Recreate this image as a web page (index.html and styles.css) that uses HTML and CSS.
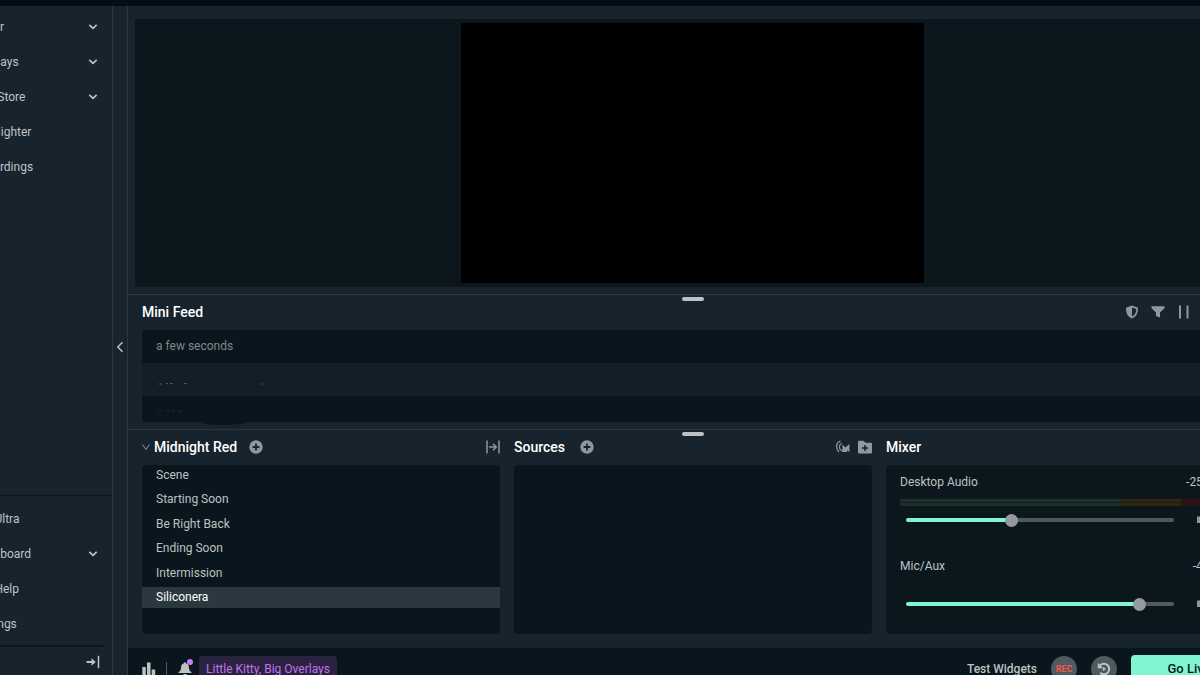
FILE: index.html
```html
<!DOCTYPE html>
<html lang="en">
<head>
<meta charset="utf-8">
<title>Streaming editor</title>
<link rel="stylesheet" href="styles.css">
</head>
<body>
<svg class="defs" width="0" height="0" aria-hidden="true">
  <symbol id="chevron" viewBox="0 0 10 8"><path d="M1.3 1.8 5 5.4 8.7 1.8" fill="none" stroke="currentColor" stroke-width="1.7"/></symbol>
  <symbol id="plus" viewBox="0 0 14 14"><path fill="currentColor" fill-rule="evenodd" d="M7 .3a6.7 6.7 0 1 0 0 13.4A6.7 6.7 0 0 0 7 .3zM6.1 3.6h1.8v2.500h2.500v1.800H7.900v2.500H6.100V7.900H3.600V6.100h2.500z"/></symbol>
  <symbol id="speaker" viewBox="0 0 14 14"><path fill="currentColor" d="M1 4Q1 3.500 1.700 3.500H5L8 .5v13L5 10H1.700Q1 10 1 9.500z"/><path d="M10 4q3 3 0 6" fill="none" stroke="currentColor" stroke-width="1.500"/></symbol>
</svg>
<div class="app">
  <header class="titlebar"></header>
  <div class="shell">
    <aside class="sidebar">
      <nav class="nav">
        <a class="nav-item" href="#">Editor<svg class="chevron"><use href="#chevron"/></svg></a>
        <a class="nav-item" href="#">Overlays<svg class="chevron"><use href="#chevron"/></svg></a>
        <a class="nav-item" href="#">App Store<svg class="chevron"><use href="#chevron"/></svg></a>
        <a class="nav-item" href="#">Highlighter</a>
        <a class="nav-item" href="#">Recordings</a>
      </nav>
      <nav class="nav nav-bottom">
        <a class="nav-item" href="#">Get Ultra</a>
        <a class="nav-item" href="#">Dashboard<svg class="chevron"><use href="#chevron"/></svg></a>
        <a class="nav-item" href="#">Get Help</a>
        <a class="nav-item" href="#">Settings</a>
      </nav>
      <div class="sidebar-foot">
        <button class="icon-btn" aria-label="Toggle sidebar">
          <svg width="14" height="14" viewBox="0 0 14 14" fill="none" stroke="currentColor"><path d="M.5 7h7" stroke-width="2"/><path d="M5.500 3.200 9.800 7 5.500 10.800z" fill="currentColor" stroke="none"/><path d="M12.500.8v12.400" stroke-width="1.500"/></svg>
        </button>
      </div>
    </aside>
    <button class="collapse" aria-label="Collapse panel">
      <svg width="8" height="12" viewBox="0 0 8 12"><path d="M6.500 1.300 1.800 6l4.700 4.700" fill="none" stroke="currentColor" stroke-width="1.500"/></svg>
    </button>
    <main class="main">
      <section class="preview"><div class="canvas"></div></section>

      <section class="feed">
        <div class="grip"></div>
        <div class="feed-head">
          <h2>Mini Feed</h2>
          <div class="tools">
            <button class="icon-btn" aria-label="Safe mode"><svg width="14" height="14" viewBox="0 0 14 14"><path fill="currentColor" fill-rule="evenodd" d="M7 .5 13 2.700C13 8 11.500 11.500 7 13.500 2.500 11.500 1 8 1 2.700zM7 2.500v9c3-1.500 4.200-4 4.300-7.600z"/></svg></button>
            <button class="icon-btn" aria-label="Filter"><svg width="14" height="14" viewBox="0 0 14 14"><path fill="currentColor" d="M.5 1.200h13v2L9 7.500v5L5 11V7.500L.5 3.200z"/></svg></button>
            <button class="icon-btn" aria-label="Pause"><svg width="14" height="14" viewBox="0 0 14 14"><path fill="currentColor" d="M2 .5h2v13H2zM9.500.5h2v13h-2z"/></svg></button>
            <button class="icon-btn" aria-label="Skip"><svg width="14" height="14" viewBox="0 0 14 14"><path fill="currentColor" d="M1 1l6 6-6 6zM7 1l6 6-6 6z"/></svg></button>
            <button class="icon-btn" aria-label="Mute"><svg width="14" height="14"><use href="#speaker"/></svg></button>
          </div>
        </div>
        <div class="feed-list">
          <div class="feed-row">a few seconds</div>
          <div class="feed-row alt"><svg class="marks" width="110" height="8" viewBox="0 0 110 8"><path d="M3 5h3M10 4.500h2M14 4.500h3M28 4.500h3M105 5h2" stroke="#4a565c"/><path d="M20 5h4M60 5h4M88 5h4" stroke="#1d2a32"/></svg></div>
          <div class="feed-row"><svg class="marks" width="90" height="8" viewBox="0 0 90 8"><path d="M2 5h3M10 5h4M16 5h3M22 5h4" stroke="#1f2c33"/><ellipse cx="67" cy="16" rx="23" ry="3" fill="#09161d"/></svg></div>
        </div>
      </section>

      <section class="docks">
        <div class="grip"></div>
        <div class="dock">
          <div class="dock-head">
            <svg class="thin-chevron" width="8" height="8" viewBox="0 0 8 8"><path d="M.5 1.500 4 6.500l3.500-5" fill="none" stroke="currentColor"/></svg>
            <h2>Midnight Red</h2>
            <button class="icon-btn" aria-label="Add scene"><svg width="14" height="14"><use href="#plus"/></svg></button>
            <div class="tools">
              <button class="icon-btn" aria-label="Scene transitions"><svg width="14" height="14" viewBox="0 0 14 14" fill="none" stroke="currentColor" stroke-width="1.500"><path d="M1 .5v13M13 .5v13M3 7h6.500M7 3.800 10.200 7 7 10.200"/></svg></button>
            </div>
          </div>
          <ul class="panel scenes">
            <li>Scene</li>
            <li>Starting Soon</li>
            <li>Be Right Back</li>
            <li>Ending Soon</li>
            <li>Intermission</li>
            <li class="active">Siliconera</li>
          </ul>
        </div>
        <div class="dock">
          <div class="dock-head sources-head">
            <h2>Sources</h2>
            <button class="icon-btn" aria-label="Add source"><svg width="14" height="14"><use href="#plus"/></svg></button>
            <div class="tools">
              <button class="icon-btn" aria-label="Selective recording"><svg width="14" height="14" viewBox="0 0 14 14"><g fill="none" stroke="currentColor" stroke-width="1.200"><path d="M4.500 1C0 2.500-.8 8 3 12"/><path d="M5.800 3.300C3 4.500 2.500 8 5 10.500"/></g><path fill="currentColor" d="M6.500 4.500 9.500 7.500l1-1L13.500 4v8l-2.500-1.500V12H6.200l-1-1.500 1.300-1.500z"/></svg></button>
              <button class="icon-btn" aria-label="Add group"><svg width="14" height="14" viewBox="0 0 14 14"><path fill="currentColor" fill-rule="evenodd" d="M1 .8h4.500L7.500 2.800H13q1 0 1 1v8.700q0 1-1 1H1q-1 0-1-1V1.800q0-1 1-1zM6.200 5v2.200H4v1.600h2.200V11h1.600V8.800H10V7.200H7.800V5z"/></svg></button>
            </div>
          </div>
          <div class="panel"></div>
        </div>
        <div class="dock">
          <div class="dock-head"><h2>Mixer</h2></div>
          <div class="panel mixer">
            <div class="channel">
              <div class="channel-head"><label for="desktop">Desktop Audio</label><span>-25.0 dB</span></div>
              <div class="meters"><div class="meter"></div><div class="meter"></div></div>
              <div class="volume">
                <input id="desktop" type="range" min="0" max="100" value="39" style="--level:39%">
                <button class="icon-btn" aria-label="Mute Desktop Audio"><svg width="14" height="14"><use href="#speaker"/></svg></button>
              </div>
            </div>
            <div class="channel">
              <div class="channel-head"><label for="mic">Mic/Aux</label><span>-4.0 dB</span></div>
              <div class="meters"></div>
              <div class="volume">
                <input id="mic" type="range" min="0" max="100" value="89" style="--level:89%">
                <button class="icon-btn" aria-label="Mute Mic/Aux"><svg width="14" height="14"><use href="#speaker"/></svg></button>
              </div>
            </div>
          </div>
        </div>
      </section>

      <footer class="statusbar">
        <button class="icon-btn" aria-label="Performance"><svg width="14" height="14" viewBox="0 0 14 14"><path fill="currentColor" d="M.3 5h3.500v9H.3zM5 .5h3.500V14H5zM9.700 7.500h3.500V14H9.700z"/></svg></button>
        <span class="divider"></span>
        <button class="icon-btn bell" aria-label="Notifications"><svg width="14" height="14" viewBox="0 0 14 14"><path fill="currentColor" d="M7 .3q1 0 1 1Q11 2 11 6q0 3 2.500 4v1H.5v-1Q3 9 3 6q0-4 3-4.700 0-1 1-1zM5.200 12h3.600q-.3 1.700-1.800 1.700T5.200 12z"/></svg><i class="dot"></i></button>
        <a class="notice" href="#">Little Kitty, Big Overlays</a>
        <div class="actions">
          <button class="link-btn">Test Widgets</button>
          <button class="round rec">REC</button>
          <button class="round" aria-label="Replay buffer"><svg width="14" height="14" viewBox="0 0 14 14" fill="none" stroke="currentColor"><path d="M3.200 3.200A5.300 5.300 0 1 1 3.200 10.800" stroke-width="2"/><path d="M.8.8v5.400h5.400z" fill="currentColor" stroke="none"/><path d="M6 5v4l3-2z" fill="currentColor" stroke="none"/></svg></button>
          <button class="go-live">Go Live</button>
        </div>
      </footer>
    </main>
  </div>
</div>
</body>
</html>
```

FILE: styles.css
```css
:root {
  --bg: #17242d;
  --section: #09161d;
  --border: #2b383f;
  --text: #bdc2c4;
  --icon: #91979a;
  --teal: #80f5d2;
}
* { box-sizing: border-box; }
html, body { height: 100%; }
body {
  margin: 0;
  overflow: hidden;
  background: var(--bg);
  color: var(--text);
  font: 12px/16px Roboto, "Open Sans", sans-serif;
}
button {
  padding: 0;
  border: 0;
  background: none;
  color: inherit;
  font: inherit;
}
a { color: inherit; text-decoration: none; }
svg { display: block; }
.defs { position: absolute; }
h2 { margin: 0; color: #fff; font-size: 14px; font-weight: 500; line-height: 20px; }

/* The app bleeds past the left, right and bottom edges of the window. */
.app {
  display: flex;
  flex-direction: column;
  height: calc(100vh + 14px);
  margin: 0 -58px 0 -27px;
}
.titlebar { height: 6px; background: #040d14; }
.shell { flex: 1; display: flex; min-height: 0; }

.sidebar {
  display: flex;
  flex-direction: column;
  width: 140px;
  padding-top: 3px;
  border-right: 1px solid var(--border);
}
.nav-item {
  display: flex;
  align-items: center;
  justify-content: space-between;
  height: 35px;
  padding-right: 14px;
}
.chevron { width: 10px; height: 8px; }
.nav-bottom {
  margin-top: auto;
  padding: 5px 0 4px;
  border-top: 1px solid #09161d;
}
.sidebar-foot {
  display: flex;
  justify-content: flex-end;
  height: 44px;
  margin-right: 8px;
  padding: 8px 4px 0 0;
  border-top: 2px solid #0b171d;
}
.sidebar-foot .icon-btn { height: 14px; color: var(--text); }
.collapse {
  display: grid;
  place-items: center;
  width: 14px;
  padding-bottom: 2px;
  color: var(--text);
}

.main {
  flex: 1;
  min-width: 0;
  display: flex;
  flex-direction: column;
  border-left: 1px solid var(--border);
}
.preview {
  flex: 1;
  display: flex;
  justify-content: center;
  min-height: 0;
  margin: 13px 8px 7px 7px;
  padding: 4px;
  background: #0b171c;
}
.canvas { aspect-ratio: 16 / 9; background: #000; }

.grip {
  position: absolute;
  top: 2px;
  left: 50%;
  width: 22px;
  height: 4px;
  margin-left: -11px;
  border-radius: 2px;
  background: #bdc2c4;
}
.feed {
  position: relative;
  padding: 7px 15px 7px 14px;
  border-top: 1px solid var(--border);
}
.feed-head { display: flex; align-items: center; height: 20px; }
.icon-btn { display: block; color: var(--icon); }
.tools { display: flex; gap: 12px; margin-left: auto; }
.feed-list {
  margin-top: 8px;
  border-radius: 4px;
  background: var(--section);
}
.feed-row { height: 33px; padding: 8px 14px; color: #81888c; }
.feed-row.alt { padding-top: 16px; background: #131f27; }
.feed-row:last-child { height: 26px; padding-top: 10px; }
.marks { overflow: visible; }

.docks {
  position: relative;
  display: grid;
  grid-template-columns: repeat(3, 1fr);
  grid-template-rows: minmax(0, 1fr);
  gap: 14px;
  height: 219px;
  padding: 7px 14px 14px;
  border-top: 1px solid var(--border);
}
.dock { display: flex; flex-direction: column; min-width: 0; min-height: 0; }
.dock-head { flex: none; display: flex; align-items: center; gap: 12px; height: 20px; }
.sources-head { gap: 15px; }
.sources-head .tools { gap: 8px; }
.thin-chevron { margin-right: -8px; color: var(--icon); }
.panel {
  flex: 1;
  min-height: 0;
  margin: 8px 0 0;
  border-radius: 4px;
  background: var(--section);
}
.scenes {
  display: flex;
  flex-direction: column;
  justify-content: space-between;
  padding: 0 0 26px;
  list-style: none;
}
.scenes li { padding: 0 14px; line-height: 21px; }
.scenes .active { color: #fff; background: var(--border); }

.mixer { padding: 9px 14px 0; background: #0b171c; }
.channel { height: 84px; }
.channel-head { display: flex; justify-content: space-between; }
.meters { height: 7px; margin-top: 9px; display: grid; gap: 1px; background: #0f1f22; }
.meters:empty { background: none; }
.meter {
  height: 3px;
  background: linear-gradient(to right, #1b3029 67%, #33260f 67% 85%, #330f14 85%);
}
.volume {
  display: flex;
  align-items: center;
  justify-content: space-between;
  height: 14px;
  margin-top: 7px;
  padding: 0 20px 0 6px;
}
.volume input {
  appearance: none;
  width: 268px;
  height: 4px;
  margin: 0;
  border-radius: 2px;
  background: linear-gradient(to right, var(--teal) var(--level), #4f5a60 var(--level));
}
.volume input::-webkit-slider-thumb {
  appearance: none;
  width: 13px;
  height: 13px;
  border-radius: 50%;
  background: #969a9e;
}

.statusbar {
  display: flex;
  align-items: center;
  height: 41px;
  padding: 0 11px 0 14px;
  background: var(--section);
}
.statusbar .icon-btn { color: var(--text); }
.divider { width: 1px; height: 14px; margin: 0 11px 0 10px; background: #4f5a60; }
.bell { position: relative; }
.dot {
  position: absolute;
  top: -3px;
  right: -1px;
  width: 6px;
  height: 6px;
  border-radius: 50%;
  background: #c77dff;
}
.notice {
  margin-left: 7px;
  padding: 5px 7px;
  border-radius: 4px;
  background: #29233f;
  color: #c371f2;
}
.actions { display: flex; align-items: center; gap: 14px; margin-left: auto; }
.link-btn { font-weight: 500; }
.round {
  display: grid;
  place-items: center;
  width: 26px;
  height: 26px;
  border-radius: 50%;
  background: #4f5a60;
}
.rec { color: #f85640; font-size: 9px; font-weight: 700; }
.go-live {
  width: 116px;
  height: 28px;
  border-radius: 4px;
  background: var(--teal);
  color: #09161d;
  font-size: 13px;
  font-weight: 500;
}
```
